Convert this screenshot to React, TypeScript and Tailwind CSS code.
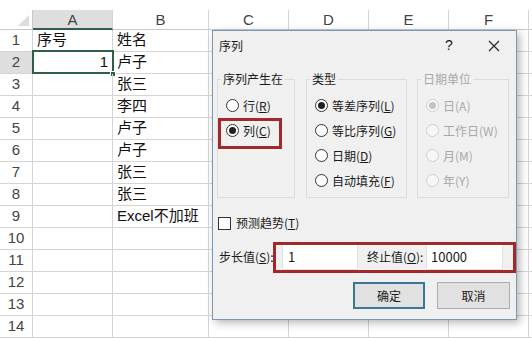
import React from 'react';

const cols = ['A', 'B', 'C', 'D', 'E', 'F'];

const cells: { a: string; b: string }[] = [
  { a: '序号', b: '姓名' },
  { a: '1', b: '卢子' },
  { a: '', b: '张三' },
  { a: '', b: '李四' },
  { a: '', b: '卢子' },
  { a: '', b: '卢子' },
  { a: '', b: '张三' },
  { a: '', b: '张三' },
  { a: '', b: 'Excel不加班' },
  { a: '', b: '' },
  { a: '', b: '' },
  { a: '', b: '' },
  { a: '', b: '' },
  { a: '', b: '' },
];

const sheetFont = { fontFamily: '"Liberation Sans", "Noto Sans CJK SC", sans-serif' };
const uiFont = { fontFamily: '"Noto Sans CJK SC", "Liberation Sans", sans-serif' };

const Radio = ({ checked, disabled }: { checked?: boolean; disabled?: boolean }) => (
  <span
    className={`flex items-center justify-center w-[13px] h-[13px] rounded-full border shrink-0 ${
      disabled ? 'border-[#cfcfcf] bg-[#f6f6f6]' : 'border-[#333] bg-white'
    }`}
  >
    {checked && (
      <span className={`w-[7px] h-[7px] rounded-full ${disabled ? 'bg-[#c4c4c4]' : 'bg-[#222]'}`} />
    )}
  </span>
);

const Option = ({
  label,
  hotkey,
  checked,
  disabled,
}: {
  label: string;
  hotkey: string;
  checked?: boolean;
  disabled?: boolean;
}) => (
  <div className={`flex items-center h-[25px] gap-[4px] ${disabled ? 'text-[#a8a8a8]' : 'text-[#1a1a1a]'}`}>
    <Radio checked={checked} disabled={disabled} />
    <span className="whitespace-nowrap">
      {label}
      {disabled ? (
        <>({hotkey})</>
      ) : (
        <>
          (<span className="underline">{hotkey}</span>)
        </>
      )}
    </span>
  </div>
);

const Group = ({
  title,
  width,
  disabled,
  children,
}: {
  title: string;
  width: string;
  disabled?: boolean;
  children: React.ReactNode;
}) => (
  <fieldset className={`${width} h-[127px] border border-[#dcdcdc] pl-[8px] pt-[6px]`}>
    <legend className={`ml-[-5px] px-[2px] leading-[16px] ${disabled ? 'text-[#a8a8a8]' : 'text-[#1a1a1a]'}`}>
      {title}
    </legend>
    {children}
  </fieldset>
);

const SeriesDialog = () => (
  <div
    className="absolute left-[212px] top-[30px] w-[305px] bg-[#f0f0f0] border border-[#7f98b2] shadow-[3px_3px_8px_rgba(0,0,0,0.28)] text-[12px]"
    style={uiFont}
  >
    {/* title bar */}
    <div className="flex items-center justify-between h-[29px] pl-[6px] pr-[7px] text-[#1a1a1a]">
      <span>序列</span>
      <div className="flex items-center gap-[15px]">
        <span className="w-[30px] text-center text-[14px]" style={sheetFont}>
          ?
        </span>
        <span className="w-[30px] flex justify-center">
          <svg width="12" height="12" viewBox="0 0 12 12">
            <path d="M1 1 L11 11 M11 1 L1 11" stroke="#222" strokeWidth="1.1" />
          </svg>
        </span>
      </div>
    </div>

    {/* groups */}
    <div className="flex mt-[11px] pl-[4px] gap-[11px]">
      <Group title="序列产生在" width="w-[78px]">
        <Option label="行" hotkey="R" />
        <Option label="列" hotkey="C" checked />
      </Group>
      <Group title="类型" width="w-[101px]">
        <Option label="等差序列" hotkey="L" checked />
        <Option label="等比序列" hotkey="G" />
        <Option label="日期" hotkey="D" />
        <Option label="自动填充" hotkey="F" />
      </Group>
      <Group title="日期单位" width="w-[92px] ml-[-1px]" disabled>
        <Option label="日" hotkey="A" checked disabled />
        <Option label="工作日" hotkey="W" disabled />
        <Option label="月" hotkey="M" disabled />
        <Option label="年" hotkey="Y" disabled />
      </Group>
    </div>

    {/* trend checkbox */}
    <div className="flex items-center h-[20px] mt-[15px] pl-[5px] gap-[5px] text-[#1a1a1a]">
      <span className="w-[13px] h-[13px] border border-[#333] bg-white" />
      <span>
        预测趋势(<span className="underline">T</span>)
      </span>
    </div>

    {/* step / stop values */}
    <div className="flex items-center h-[27px] mt-[10px] pl-[6px] text-[#1a1a1a]">
      <span className="w-[63px] whitespace-nowrap">
        步长值(<span className="underline">S</span>):
      </span>
      <div className="w-[76px] h-[27px] bg-white border border-[#e2e2e2] flex items-center pl-[5px] text-[13px]">
        1
      </div>
      <span className="w-[68px] pl-[9px] whitespace-nowrap">
        终止值(<span className="underline">O</span>):
      </span>
      <div className="w-[77px] h-[27px] bg-white border border-[#e2e2e2] flex items-center pl-[4px] text-[13px]">
        10000
      </div>
    </div>

    {/* buttons */}
    <div className="flex justify-end gap-[12px] mt-[12px] mb-[10px] pr-[6px] text-[#1a1a1a]">
      <button className="w-[72px] h-[27px] bg-[#e1e1e1] border-2 border-[#3a7891]">确定</button>
      <button className="w-[73px] h-[27px] bg-[#e1e1e1] border border-[#adadad]">取消</button>
    </div>

    {/* red annotation boxes */}
    <div className="absolute left-[5px] top-[87px] w-[64px] h-[31px] border-[3px] border-[#a3282c]" />
    <div className="absolute left-[60px] top-[211px] w-[243px] h-[31px] border-[3px] border-[#a3282c]" />
  </div>
);

export default function App() {
  return (
    <div className="relative w-[532px] h-[339px] overflow-hidden bg-white" style={sheetFont}>
      <div className="h-[10px]" />
      <div className="grid grid-cols-[33px_80px_96px_80px_80px_80px_80px_1fr] text-[15px]">
        {/* column headers */}
        <div className="h-[20px] border-r border-b border-[#c8c8c8] flex items-end justify-end pr-[3px] pb-[3px]">
          <svg width="11" height="11" viewBox="0 0 11 11">
            <path d="M11 0 L11 11 L0 11 Z" fill="#dcdcdc" />
          </svg>
        </div>
        {cols.map((c) => (
          <div
            key={c}
            className={`h-[20px] flex items-center justify-center leading-none text-[#444] border-r border-[#d4d4d4] ${
              c === 'A' ? 'bg-[#dedede] border-b-2 border-b-[#2e6048]' : 'border-b border-b-[#c8c8c8]'
            }`}
          >
            {c}
          </div>
        ))}
        <div className="h-[20px] border-b border-[#c8c8c8]" />

        {/* rows */}
        {cells.map((row, i) => (
          <React.Fragment key={i}>
            <div
              className={`h-[22px] flex items-center justify-center text-[#444] border-r border-b border-[#d4d4d4] ${
                i === 1 ? 'bg-[#dedede]' : ''
              }`}
            >
              {i + 1}
            </div>
            <div
              className={`relative h-[22px] flex items-center px-[4px] text-[#111] border-r border-b border-[#d4d4d4] ${
                i === 1 ? 'justify-end' : ''
              }`}
            >
              {row.a}
              {i === 1 && (
                <>
                  <div className="absolute -left-[1px] -top-[2px] w-[82px] h-[24px] border-2 border-[#2e6048]" />
                  <div className="absolute -right-[4px] -bottom-[4px] w-[6px] h-[6px] bg-[#2e6048] border border-white" />
                </>
              )}
            </div>
            <div className="h-[22px] flex items-center px-[4px] text-[#111] border-r border-b border-[#d4d4d4] whitespace-nowrap">
              {row.b}
            </div>
            {[0, 1, 2, 3].map((k) => (
              <div key={k} className="h-[22px] border-r border-b border-[#d4d4d4]" />
            ))}
            <div className="h-[22px] border-b border-[#d4d4d4]" />
          </React.Fragment>
        ))}
      </div>
      <SeriesDialog />
    </div>
  );
}
